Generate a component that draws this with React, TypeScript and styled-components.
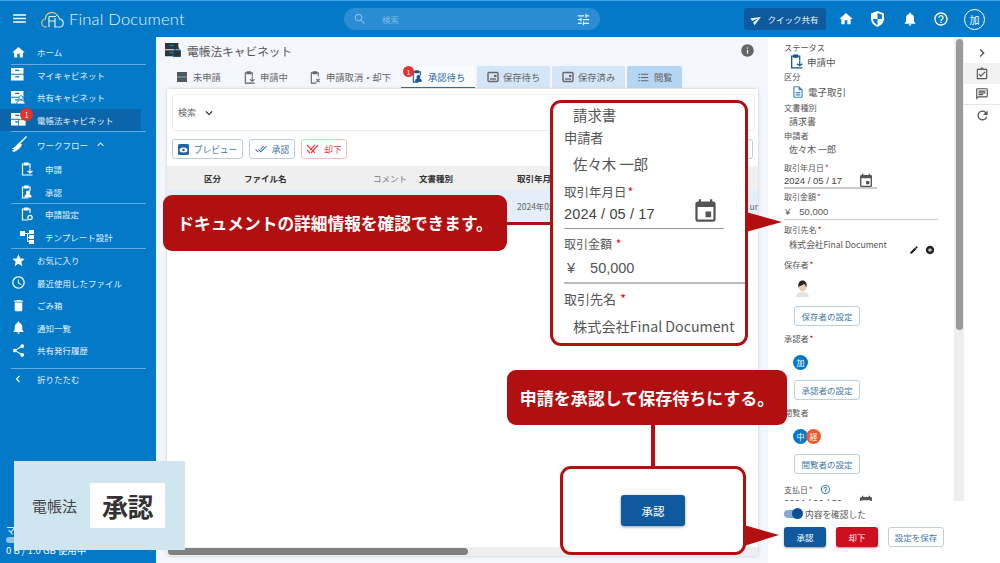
import React from "react";
import styled, { createGlobalStyle } from "styled-components";
import {
  MdMenu, MdSearch, MdTune, MdHome, MdNotifications, MdHelpOutline, MdStar, MdAccessTime,
  MdDelete, MdShare, MdChevronLeft, MdChevronRight, MdExpandMore, MdExpandLess, MdEdit, MdAddCircle,
  MdEvent, MdSend, MdInfo, MdOutlineChat, MdRefresh, MdOutlineDescription, MdFormatListBulleted,
  MdDoneAll, MdOutlineAssignmentTurnedIn,
} from "react-icons/md";

const JP = `"Noto Sans CJK JP", "Noto Sans", "Liberation Sans", sans-serif`;
const RED = "#b20f10";

const Global = createGlobalStyle`
  html, body { margin: 0; padding: 0; width: 1000px; height: 563px; overflow: hidden; background: #fff; }
  body { font-family: ${JP}; color: #444; }
  * { box-sizing: border-box; }
  #root { width: 1000px; height: 563px; }
`;

const Page = styled.div`position: relative; width: 1000px; height: 563px; display: flex; flex-direction: column; overflow: hidden;`;

/* ---------- header ---------- */
const Header = styled.header`
  height: 37px; flex: none; background: #0479c8; border-top: 1px solid #3ea2e2; display: flex; align-items: center; color: #fff;
`;
const MenuBtn = styled.div`width: 41px; padding-left: 11px; display: flex; font-size: 17px; margin-top: -2px;`;
const LogoWrap = styled.div`width: 303px; display: flex; align-items: center; gap: 3px;`;
const LogoText = styled.span`font-family: "Lato", sans-serif; font-weight: 300; font-size: 16.5px; letter-spacing: 0.2px; color: #e8f5ff;`;
const SearchBar = styled.div`
  width: 256px; height: 22px; border-radius: 11px; background: #2a8cd2; display: flex; align-items: center; padding: 0 9px; gap: 15px; color: #7dbde8;
  font-size: 8.5px;
  svg:first-child { font-size: 14px; margin-right: 0; }
  svg:last-child { margin-left: auto; color: #e6f4ff; font-size: 15px; }
`;
const QuickShare = styled.div`
  margin-left: 144px; width: 82px; height: 22px; border-radius: 3px; background: #0d5a9e; display: flex; align-items: center; justify-content: center; gap: 5px; font-size: 8.5px; color: #e8f3ff;
  svg { font-size: 11px; transform: rotate(-30deg); }
`;
const HeaderIcons = styled.div`display: flex; align-items: center; margin-left: 11px; width: 148px; justify-content: space-between; font-size: 16px;`;
const HeaderIcon = styled.span`display: flex; width: 18px; justify-content: center;`;
const UserCircle = styled.div`width: 21px; height: 21px; border: 1px solid #fff; border-radius: 50%; display: flex; align-items: center; justify-content: center; font-size: 10px;`;

const Body = styled.div`flex: 1; display: flex; min-height: 0;`;

/* ---------- sidebar ---------- */
const Sidebar = styled.nav`width: 156px; flex: none; background: #0479c8; color: #e2f1fb; padding-top: 4px; display: flex; flex-direction: column; position: relative;`;
const NavRow = styled.div<{ $sub?: boolean; $active?: boolean; $tall?: boolean }>`
  height: ${p => (p.$tall ? 27 : 22.5)}px; flex: none; display: flex; align-items: center; font-size: 8.5px; width: 141px; position: relative;
  padding-left: ${p => (p.$sub ? "20px" : "11px")};
  background: ${p => (p.$active ? "#0a65ab" : "transparent")};
  svg { flex: none; }
`;
const NavIconBox = styled.span<{ $sub?: boolean }>`
  width: ${p => (p.$sub ? "25px" : "26px")}; display: flex; align-items: center; font-size: 14px; color: #fff;
`;
const NavDivider = styled.div<{ $keep?: boolean }>`height: 1px; width: 135px; margin-left: 11px; margin-bottom: ${p => (p.$keep ? 0 : -1)}px; background: #5eaee2; flex: none; position: relative; z-index: 1;`;
const NavBadge = styled.span`
  position: absolute; left: 20px; top: -1px; width: 13px; height: 13px; border-radius: 50%; background: #e6322c; color: #fff; font-size: 7.5px; display: flex; align-items: center; justify-content: center;
`;
const FoldChevron = styled(MdExpandLess)`margin-left: 6px;`;
const Storage = styled.div`position: absolute; left: 6px; bottom: 7px; font-size: 9.5px; color: #fff; line-height: 11px;`;
const StorageBar = styled.div`width: 130px; height: 6px; border-radius: 3px; background: #8fc4e8; margin: 1px 0 2px;`;

/* ---------- main ---------- */
const Main = styled.main`width: 612px; flex: none; background: #f3f6fc; padding: 0 0 0 11px; display: flex; flex-direction: column;`;
const TitleRow = styled.div`height: 29px; flex: none; display: flex; align-items: center; gap: 6px; font-size: 11.7px; color: #555; margin-left: -2px; padding-bottom: 3px; padding-right: 13px;`;
const InfoIcon = styled.span`margin-left: auto; display: flex; font-size: 15px; color: #666;`;
const Tabs = styled.div`height: 23px; flex: none; display: flex; position: relative;`;
const Tab = styled.div<{ $w: number; $kind?: "active" | "soft" | "strong" }>`
  width: ${p => p.$w}px; height: 22px; flex: none; display: flex; align-items: center; gap: 4px; padding-left: 10px; font-size: 9.3px; position: relative; margin-right: 2px; white-space: nowrap;
  color: ${p => (p.$kind === "active" ? "#2f6f9e" : "#666")};
  background: ${p => (p.$kind === "active" ? "#f9fbfe" : p.$kind === "soft" ? "#d4e5f8" : p.$kind === "strong" ? "#b5d5f5" : "transparent")};
  border-bottom: ${p => (p.$kind === "active" ? "1.5px solid #15578c" : "none")};
  border-radius: 2px 2px 0 0;
  svg { font-size: 13px; flex: none; }
`;
const TabBadge = styled.span`position: absolute; left: 2px; top: 0; width: 11px; height: 11px; border-radius: 50%; background: #e6322c; color: #fff; font-size: 7px; display: flex; align-items: center; justify-content: center;`;
const Card = styled.section`flex: 1; margin: 0 10px 7px 0; background: #fff; box-shadow: 0 0 3px #c4c9d2; padding: 5px 0 0; display: flex; flex-direction: column; position: relative; min-height: 0;`;
const SearchBox = styled.div`height: 37px; margin: 0 3px 0 5px; flex: none; border: 1px solid #ececec; border-radius: 3px; display: flex; align-items: center; gap: 6px; padding-left: 5px; font-size: 9px; color: #666; svg { font-size: 14px; color: #222; }`;
const Toolbar = styled.div`display: flex; gap: 6px; margin: 8px 5px 7px; height: 20px; flex: none;`;
const ToolBtn = styled.div<{ $w: number; $red?: boolean; $right?: boolean }>`
  width: ${p => p.$w}px; height: 20px; border-radius: 3px; display: flex; align-items: center; justify-content: center; gap: 5px; font-size: 8.7px;
  border: 1px solid ${p => (p.$red ? "#f4bdbd" : "#b8cde0")};
  color: ${p => (p.$red ? "#d84b4b" : "#3f79a8")};
  margin-left: ${p => (p.$right ? "auto" : "0")};
  svg { font-size: 12px; }
`;
const Cols = "37px 40px 129px 46px 98px 1fr";
const TableHead = styled.div`height: 24px; flex: none; display: grid; grid-template-columns: ${Cols}; align-items: center; background: #efefef; font-size: 8.5px; font-weight: 700; color: #333;`;
const MutedCell = styled.span`font-weight: 400; color: #777; margin-top: -1px;`;
const TableRow = styled.div`height: 32px; flex: none; display: grid; grid-template-columns: ${Cols}; align-items: center; background: #e2eefa; font-size: 8.5px; color: #666;`;
const RowEnd = styled.span`display: flex; justify-content: space-between; white-space: nowrap;`;
const HScroll = styled.div`margin-top: auto; height: 9px; background: #eee; flex: none; display: flex; align-items: center;`;
const HThumb = styled.div`width: 300px; height: 7px; border-radius: 4px; background: #808080; margin-left: 1px;`;

/* ---------- detail panel ---------- */
const Panel = styled.aside`width: 196px; flex: none; background: #fff; display: flex; flex-direction: column; min-height: 0;`;
const ScrollArea = styled.div`flex: 1; display: flex; min-height: 0; overflow: hidden;`;
const Fields = styled.div`flex: 1; padding: 4px 0 0 16px; overflow: hidden; min-width: 0;`;
const Track = styled.div`width: 10px; flex: none; background: #eee; padding: 2px 1px 0 2px;`;
const Thumb = styled.div`height: 291px; border-radius: 4px; background: #9a9a9a;`;
const Label = styled.div<{ $h?: number; $small?: boolean }>`height: ${p => p.$h ?? 12}px; font-size: ${p => (p.$small ? 8 : 8.2)}px; line-height: ${p => p.$h ?? 12}px; color: #555; white-space: nowrap;`;
const Req = styled.span`color: #d11; margin-left: 1px;`;
const IconValue = styled.div<{ $indent: number; $h: number }>`height: ${p => p.$h}px; display: flex; align-items: center; gap: 3px; padding-left: ${p => p.$indent}px; font-size: 9.5px; color: #555;`;
const Value = styled.div<{ $h: number }>`height: ${p => p.$h}px; padding-left: 5px; font-size: 9px; line-height: ${p => p.$h}px; color: #555; white-space: nowrap;`;
const DateRow = styled.div<{ $w: number; $h: number }>`width: ${p => p.$w}px; height: ${p => p.$h}px; display: flex; align-items: center; justify-content: space-between; font-family: "Liberation Sans", sans-serif; font-size: 9.5px; color: #444; border-bottom: 2px solid #ccc; padding-right: 3px; svg { font-size: 16px; color: #555; flex: none; }`;
const AmountRow = styled.div`width: 154px; height: 17px; display: flex; align-items: center; gap: 9px; font-family: "Liberation Sans", sans-serif; font-size: 9.5px; color: #555; border-bottom: 1.5px solid #ccc; padding-left: 1px;`;
const PartnerRow = styled.div`position: relative; height: 23px; padding-left: 5px; padding-top: 2px; font-size: 8.6px; color: #555; white-space: nowrap; line-height: 14px;`;
const PartnerTools = styled.span`position: absolute; left: 125px; top: 10px; display: flex; gap: 6px; font-size: 10px; color: #222;`;
const AvatarRow = styled.div<{ $indent?: number }>`height: 36px; display: flex; align-items: center; padding-left: ${p => p.$indent ?? 9}px;`;
const Avatar = styled.div<{ $bg: string; $over?: boolean }>`width: 15px; height: 15px; border-radius: 50%; background: ${p => p.$bg}; color: #fff; font-size: 8px; display: flex; align-items: center; justify-content: center; margin-left: ${p => (p.$over ? "-2px" : "0")};`;
const SetBtn = styled.div`margin-left: 10px; width: 66px; height: 20px; border: 1px solid #bcd0e2; border-radius: 3px; font-size: 8.5px; color: #3f79a8; display: flex; align-items: center; justify-content: center;`;
const Gap = styled.div<{ $h: number }>`height: ${p => p.$h}px;`;
const HelpMark = styled(MdHelpOutline)`color: #2f80c5; font-size: 11px; margin-left: 7px; vertical-align: -2px;`;
const Bottom = styled.div`height: 62px; flex: none; background: #fff; padding: 5px 0 0 16px;`;
const ConfirmRow = styled.div`height: 16px; display: flex; align-items: center; gap: 3px; font-size: 8.7px; color: #555;`;
const Switch = styled.div`width: 18px; height: 8px; border-radius: 4px; background: #84a9d3; position: relative;`;
const Knob = styled.div`position: absolute; right: -1px; top: -2px; width: 11px; height: 11px; border-radius: 50%; background: #0f4f96;`;
const ActionRow = styled.div`display: flex; gap: 10px; margin-top: 5px;`;
const ActionBtn = styled.div<{ $kind: "blue" | "red" | "line" }>`
  width: ${p => (p.$kind === "line" ? "56px" : "42px")}; height: 20px; border-radius: 3px; font-size: 8.5px; display: flex; align-items: center; justify-content: center;
  background: ${p => (p.$kind === "blue" ? "#0f5a9f" : p.$kind === "red" ? "#cc1020" : "#fff")};
  color: ${p => (p.$kind === "line" ? "#3f79a8" : "#fff")};
  border: ${p => (p.$kind === "line" ? "1px solid #bcd0e2" : "none")};
  box-shadow: ${p => (p.$kind === "line" ? "none" : "0 1px 2px #999")};
`;

/* ---------- right rail ---------- */
const Rail = styled.div`flex: 1; background: #fff; display: flex; flex-direction: column; align-items: center; font-size: 14px; color: #555; padding-top: 5px;`;
const RailItem = styled.div<{ $on?: boolean; $line?: boolean }>`
  width: 100%; height: 21px; display: flex; align-items: center; justify-content: center;
  background: ${p => (p.$on ? "#f2f2f2" : "transparent")};
  border-bottom: ${p => (p.$line ? "1px solid #e5e5e5" : "none")};
`;

/* ---------- tutorial overlays ---------- */
const Callout = styled.div<{ $x: number; $y: number; $w: number; $h: number; $size: number }>`
  position: absolute; left: ${p => p.$x}px; top: ${p => p.$y}px; width: ${p => p.$w}px; height: ${p => p.$h}px;
  background: ${RED}; border-radius: 9px; color: #fff; font-weight: 700; font-size: ${p => p.$size}px; display: flex; align-items: center; justify-content: center; white-space: nowrap;
`;
const LineH = styled.div`position: absolute; left: 507px; top: 222px; width: 44px; height: 3px; background: ${RED};`;
const LineV = styled.div`position: absolute; left: 651px; top: 425px; width: 4px; height: 42px; background: ${RED};`;
const ZoomBox = styled.div<{ $x: number; $y: number; $w: number; $h: number }>`
  position: absolute; left: ${p => p.$x}px; top: ${p => p.$y}px; width: ${p => p.$w}px; height: ${p => p.$h}px;
  background: #fff; border: 3px solid ${RED}; border-radius: 11px;
`;
const DetailInner = styled(ZoomBox)`padding: 0 0 0 11px; color: #555;`;
const DText = styled.div<{ $h: number; $size: number; $indent?: number }>`
  height: ${p => p.$h}px; line-height: ${p => p.$h}px; font-size: ${p => p.$size}px; padding-left: ${p => p.$indent ?? 0}px; white-space: nowrap;
`;
const DDate = styled.div`width: 160px; height: 23px; display: flex; align-items: flex-start; justify-content: space-between; border-bottom: 1px solid #999; font-family: "Liberation Sans", sans-serif; font-size: 14.5px; letter-spacing: 0.15px; color: #444; padding-right: 5px; line-height: 16px; svg { font-size: 27px; color: #555; margin-top: -8px; }`;
const DAmount = styled.div`width: 181px; height: 28px; display: flex; align-items: center; gap: 15px; border-bottom: 2px solid #bbb; font-family: "Liberation Sans", sans-serif; font-size: 14.5px; padding: 0 0 3px 3px; color: #555;`;
const BigApprove = styled.div`width: 64px; height: 31px; margin: 26px 0 0 58px; background: #0f5a9f; border-radius: 3px; color: #fff; font-size: 11.5px; display: flex; align-items: center; justify-content: center; box-shadow: 0 1px 3px #999;`;
const Arrow = styled.svg`position: absolute; left: 0; top: 0; width: 1000px; height: 563px; pointer-events: none;`;
const Stamp = styled.div`position: absolute; left: 14px; top: 461px; width: 171px; height: 89px; background: #cfe6f0; display: flex; align-items: center; padding-left: 18px; gap: 13px; font-size: 15px; color: #444;`;
const StampWord = styled.div`width: 75px; height: 45px; background: #fff; font-size: 26px; font-weight: 700; color: #333; display: flex; align-items: center; justify-content: center; letter-spacing: -0.5px;`;

/* ---------- drawn icons ---------- */
const Logo = () => (
  <svg width="25" height="19" viewBox="0 0 25 19" fill="none" strokeWidth="1.2">
    <path d="M6 17H5a4 4 0 0 1-.6-8A6.5 6.5 0 0 1 16 5" stroke="#f1c66a" />
    <path d="M15 4.5a6 6 0 0 1 3.5 4.4 4.2 4.2 0 0 1 1 8.1H13" stroke="#cfe9ff" />
    <path d="M8 17V6.5M8 11h6M8 6.5h7M14 8v9" stroke="#dff1ff" />
  </svg>
);
const Cabinet = ({ lock, people, size = 15, color = "#fff" }: { lock?: boolean; people?: boolean; size?: number; color?: string }) => (
  <svg width={size} height={size * 0.87} viewBox="0 0 18 15.6" fill={color}>
    <path d="M0 0h15v7H0zM0 8h15v7H0z" />
    <path d="M5 2h5v1.5H5zM5 10h5v1.5H5z" fill="#0479c8" />
    {lock && <><rect x="9" y="8" width="9" height="7.6" rx="1" stroke="#0479c8" /><path d="M11.5 8V6.5a2 2 0 0 1 4 0V8" fill="none" stroke={color} /></>}
    {people && <><circle cx="12" cy="8" r="2.4" stroke="#0479c8" /><path d="M7 15.6c0-3 2-4.6 5-4.6s5 1.600 5 4.600z" stroke="#0479c8" /></>}
  </svg>
);
const Clip = ({ kind, color = "#fff", size = 14 }: { kind: "down" | "person" | "gear" | "x"; color?: string; size?: number }) => (
  <svg width={size} height={size} viewBox="0 0 14 14" fill="none" stroke={color} strokeWidth="1.2">
    <path d="M8 13H2.500V2h7.500v4" />
    <path d="M4.500 1h3.500v2H4.500z" fill={color} />
    {kind === "down" && <path d="M7.500 9l2.500 2 2.500-2M10 6.500V11M7.500 13h5" />}
    {kind === "person" && <><circle cx="8" cy="7.500" r="1.500" fill={color} /><path d="M5 12c0-2 1.500-2.500 3-2.500s3 .5 3 2.500z" fill={color} /></>}
    {kind === "gear" && <circle cx="10" cy="10.500" r="2.200" />}
    {kind === "x" && <path d="M8 8.500l3.500 3.500M11.500 8.500L8 12" />}
  </svg>
);
const Tree = () => (
  <svg width="15" height="14" viewBox="0 0 15 14" fill="#fff">
    <path d="M0 1h5v5H0zM9 0h5v4H9zM9 5h5v4H9zM9 10h5v4H9zM5 3h4v1H5zM7 3h1v9H7zM7 7h2v1H7zM7 11h2v1H7z" />
  </svg>
);
const Broom = () => (
  <svg width="17" height="17" viewBox="0 0 17 17" fill="#fff">
    <path d="M16 1l-1-1-6.500 6.500 1 1zM8.500 6l2.500 2.500c-1 3-4 6-8 7.500-.8-.3-1.500-.8-2-1.500 1-.3 2-1 2.500-1.700-1 .3-2 .3-3 0C3 12 6 9 8.500 6z" />
  </svg>
);
const Shield = () => (
  <svg width="15" height="16" viewBox="0 0 15 16" fill="#fff">
    <path d="M7.500 0L14 2.500v5c0 4-2.800 7-6.500 8.500C3.800 14.500 1 11.500 1 7.500v-5zM7.500 2v6H3c.2 2.800 2 4.800 4.500 6V8H12V3.800z" fillRule="evenodd" />
  </svg>
);
const Photo = () => (
  <svg width="15" height="17" viewBox="0 0 15 17">
    <path d="M1 17c0-4 3-5 6.500-5s6.500 1 6.500 5z" fill="#e4e4df" />
    <ellipse cx="7.500" cy="7" rx="3.600" ry="4.600" fill="#eccdb5" />
    <path d="M3.500 8c-1-6 2-7.500 4-7.500s5 1.500 4 7.500c-.3-2-1.500-3.500-3-4-1 1.500-3.500 2-4.200 2.200z" fill="#2b2421" />
  </svg>
);
const RejectIcon = () => (
  <svg width="13" height="11" viewBox="0 0 13 11" fill="none" stroke="#d84b4b" strokeWidth="1.200">
    <path d="M1 1l8 8M1 6l3 3M12 1L5 9M9 1L4 6" />
  </svg>
);
const Preview = () => (
  <svg width="11" height="11" viewBox="0 0 11 11">
    <rect width="11" height="11" rx="1.500" fill="#2265a5" />
    <ellipse cx="5.500" cy="6" rx="4" ry="2.500" fill="#fff" />
    <circle cx="5.500" cy="6" r="1.300" fill="#2265a5" />
  </svg>
);
const DocTab = ({ color = "#666" }: { color?: string }) => (
  <svg width="12" height="12" viewBox="0 0 12 12" fill="none" stroke={color} strokeWidth="1.400">
    <rect x="1" y="1.500" width="10" height="9" rx="1" />
    <path d="M3 8h6" />
    <rect x="7" y="4" width="2.500" height="2" fill={color} stroke="none" />
  </svg>
);

const navTop = [
  { t: "マイキャビネット", i: <Cabinet /> },
  { t: "共有キャビネット", i: <Cabinet people /> },
];

export default function App() {
  return (
    <Page>
      <Global />
      <Header>
        <MenuBtn><MdMenu /></MenuBtn>
        <LogoWrap><Logo /><LogoText>Final Document</LogoText></LogoWrap>
        <SearchBar><MdSearch /><span>検索</span><MdTune /></SearchBar>
        <QuickShare><MdSend /><span>クイック共有</span></QuickShare>
        <HeaderIcons>
          <HeaderIcon><MdHome /></HeaderIcon>
          <HeaderIcon><Shield /></HeaderIcon>
          <HeaderIcon><MdNotifications /></HeaderIcon>
          <HeaderIcon><MdHelpOutline /></HeaderIcon>
          <UserCircle>加</UserCircle>
        </HeaderIcons>
      </Header>
      <Body>
        <Sidebar>
          <NavRow><NavIconBox><MdHome size={15} /></NavIconBox>ホーム</NavRow>
          <NavDivider />
          {navTop.map(n => (
            <NavRow key={n.t}><NavIconBox>{n.i}</NavIconBox>{n.t}</NavRow>
          ))}
          <NavRow $active>
            <NavIconBox><Cabinet lock /></NavIconBox>電帳法キャビネット
            <NavBadge>1</NavBadge>
          </NavRow>
          <NavDivider />
          <NavRow $tall>
            <NavIconBox><Broom /></NavIconBox>ワークフロー
            <FoldChevron size={13} />
          </NavRow>
          <NavRow $sub><NavIconBox $sub><Clip kind="down" /></NavIconBox>申請</NavRow>
          <NavRow $sub><NavIconBox $sub><Clip kind="person" /></NavIconBox>承認</NavRow>
          <NavDivider />
          <NavRow $sub><NavIconBox $sub><Clip kind="gear" /></NavIconBox>申請設定</NavRow>
          <NavRow $sub><NavIconBox $sub><Tree /></NavIconBox>テンプレート設計</NavRow>
          <NavDivider $keep />
          <NavRow><NavIconBox><MdStar size={15} /></NavIconBox>お気に入り</NavRow>
          <NavRow><NavIconBox><MdAccessTime size={15} /></NavIconBox>最近使用したファイル</NavRow>
          <NavRow><NavIconBox><MdDelete size={15} /></NavIconBox>ごみ箱</NavRow>
          <NavRow><NavIconBox><MdNotifications size={15} /></NavIconBox>通知一覧</NavRow>
          <NavRow><NavIconBox><MdShare size={15} /></NavIconBox>共有発行履歴</NavRow>
          <Gap $h={6} />
          <NavDivider />
          <NavRow><NavIconBox><MdChevronLeft size={14} /></NavIconBox>折りたたむ</NavRow>
          <Storage>
            <div>マイキャビネット</div>
            <StorageBar />
            <div>0 B / 1.0 GB 使用中</div>
          </Storage>
        </Sidebar>
        <Main>
          <TitleRow><Cabinet lock color="#333" size={16} />電帳法キャビネット<InfoIcon><MdInfo /></InfoIcon></TitleRow>
          <Tabs>
            <Tab $w={64}><Cabinet color="#555" size={12} />未申請</Tab>
            <Tab $w={64}><Clip kind="down" color="#666" size={13} />申請中</Tab>
            <Tab $w={100}><Clip kind="x" color="#666" size={13} />申請取消・却下</Tab>
            <Tab $w={74} $kind="active"><Clip kind="person" color="#15578c" size={13} />承認待ち<TabBadge>1</TabBadge></Tab>
            <Tab $w={73} $kind="soft"><DocTab />保存待ち</Tab>
            <Tab $w={73} $kind="soft"><DocTab />保存済み</Tab>
            <Tab $w={55} $kind="strong"><MdFormatListBulleted />閲覧</Tab>
          </Tabs>
          <Card>
            <SearchBox>検索<MdExpandMore /></SearchBox>
            <Toolbar>
              <ToolBtn $w={71}><Preview />プレビュー</ToolBtn>
              <ToolBtn $w={46}><MdDoneAll />承認</ToolBtn>
              <ToolBtn $w={46} $red><RejectIcon />却下</ToolBtn>
              <ToolBtn $w={60} $right>表示</ToolBtn>
            </Toolbar>
            <TableHead>
              <span /><span>区分</span><span>ファイル名</span><MutedCell>コメント</MutedCell><span>文書種別</span><span>取引年月日</span>
            </TableHead>
            <TableRow>
              <span /><span /><span /><span /><span /><RowEnd><span>2024年05月17日</span><span>ur</span></RowEnd>
            </TableRow>
            <HScroll><HThumb /></HScroll>
          </Card>
        </Main>
        <Panel>
          <ScrollArea>
            <Fields>
              <Label>ステータス</Label>
              <IconValue $indent={5} $h={17}><Clip kind="down" color="#15578c" size={15} />申請中</IconValue>
              <Label>区分</Label>
              <IconValue $indent={7} $h={19}><MdOutlineDescription size={14} color="#3a87c8" />電子取引</IconValue>
              <Label>文書種別</Label>
              <Value $h={17}>請求書</Value>
              <Label $h={11}>申請者</Label>
              <Value $h={18}>佐々木 一郎</Value>
              <Gap $h={3} />
              <Label $small>取引年月日<Req>*</Req></Label>
              <DateRow $w={93} $h={15}>2024 / 05 / 17<MdEvent /></DateRow>
              <Gap $h={2} />
              <Label $small>取引金額<Req>*</Req></Label>
              <AmountRow><span>¥</span>50,000</AmountRow>
              <Gap $h={3} />
              <Label>取引先名<Req>*</Req></Label>
              <PartnerRow>株式会社Final Document
                <PartnerTools><MdEdit /><MdAddCircle /></PartnerTools>
              </PartnerRow>
              <Label>保存者<Req>*</Req></Label>
              <AvatarRow $indent={11}><Photo /></AvatarRow>
              <SetBtn>保存者の設定</SetBtn>
              <Gap $h={6} />
              <Label>承認者<Req>*</Req></Label>
              <AvatarRow><Avatar $bg="#0479c8">加</Avatar></AvatarRow>
              <SetBtn>承認者の設定</SetBtn>
              <Gap $h={6} />
              <Label>閲覧者</Label>
              <AvatarRow><Avatar $bg="#0479c8">中</Avatar><Avatar $bg="#ec5a2f" $over>経</Avatar></AvatarRow>
              <SetBtn>閲覧者の設定</SetBtn>
              <Gap $h={10} />
              <Label $small>支払日<Req>*</Req><HelpMark /></Label>
              <DateRow $w={93} $h={15}>2024 / 06 / 30<MdEvent /></DateRow>
            </Fields>
            <Track><Thumb /></Track>
          </ScrollArea>
          <Bottom>
            <ConfirmRow><Switch><Knob /></Switch>内容を確認した</ConfirmRow>
            <ActionRow>
              <ActionBtn $kind="blue">承認</ActionBtn>
              <ActionBtn $kind="red">却下</ActionBtn>
              <ActionBtn $kind="line">設定を保存</ActionBtn>
            </ActionRow>
          </Bottom>
        </Panel>
        <Rail>
          <RailItem><MdChevronRight size={16} /></RailItem>
          <RailItem $on><MdOutlineAssignmentTurnedIn size={14} /></RailItem>
          <RailItem $line><MdOutlineChat size={14} /></RailItem>
          <RailItem><MdRefresh size={15} /></RailItem>
        </Rail>
      </Body>

      <Arrow viewBox="0 0 1000 563">
        <path d="M746 212L782 222L746 232z" fill={RED} />
        <path d="M744 525L779 535L744 546z" fill={RED} />
      </Arrow>
      <LineH />
      <LineV />
      <Callout $x={163} $y={195} $w={344} $h={56} $size={16.7}>ドキュメントの詳細情報を確認できます。</Callout>
      <Callout $x={507} $y={370} $w={280} $h={55} $size={17}>申請を承認して保存待ちにする。</Callout>
      <DetailInner $x={550} $y={100} $w={198} $h={246}>
        <DText $h={23} $size={14.4} $indent={9}>請求書</DText>
        <DText $h={24} $size={13.2}>申請者</DText>
        <DText $h={28} $size={14.4} $indent={9}>佐々木 一郎</DText>
        <DText $h={28} $size={12.5}>取引年月日<Req>*</Req></DText>
        <DDate>2024 / 05 / 17<MdEvent /></DDate>
        <Gap $h={3} />
        <DText $h={24} $size={12}>取引金額<Req> *</Req></DText>
        <DAmount><span>¥</span>50,000</DAmount>
        <DText $h={30} $size={13}>取引先名<Req> *</Req></DText>
        <DText $h={24} $size={14.2} $indent={9}>株式会社Final Document</DText>
      </DetailInner>
      <ZoomBox $x={560} $y={466} $w={186} $h={89}>
        <BigApprove>承認</BigApprove>
      </ZoomBox>
      <Stamp>電帳法<StampWord>承認</StampWord></Stamp>
    </Page>
  );
}
